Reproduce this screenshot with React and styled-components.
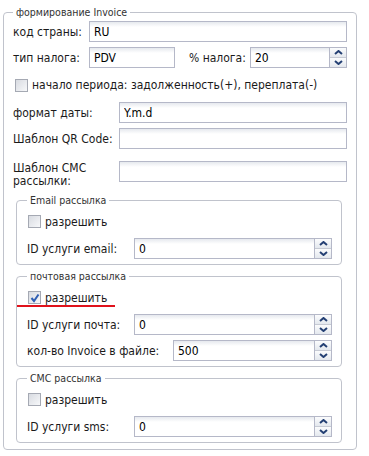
import React from 'react'
import styled, { createGlobalStyle } from 'styled-components'

const FONT = '"DejaVu Sans Condensed", "Liberation Sans", Arial, sans-serif'

const GlobalStyle = createGlobalStyle`
  body {
    margin: 0;
    background: #fff;
    font-family: ${FONT};
    font-size: 12px;
    color: #1a1a1a;
  }
`

const Page = styled.div`
  padding: 6px 0 0 3px;
`

const Fieldset = styled.fieldset`
  box-sizing: border-box;
  width: ${(p) => (p.$inner ? '326px' : '354px')};
  margin: ${(p) => (p.$inner ? '0 0 0 3px' : '0')};
  border: 1px solid #c0c3cc;
  border-radius: 4px;
  padding: ${(p) => (p.$inner ? '0 9px 5px 10px' : '0 9px 6px 9px')};
  min-width: 0;
`

const Legend = styled.legend`
  padding: 0 3px;
  font-size: 10.5px;
  line-height: 13px;
  color: #333;
`

const Body = styled.div`
  display: flex;
  flex-direction: column;
  gap: 5px;
  padding-top: ${(p) => (p.$inner ? '3px' : '2px')};
`

const Row = styled.div`
  display: flex;
  align-items: ${(p) => (p.$tall ? 'flex-start' : 'center')};
  margin-top: ${(p) => (p.$tall ? '7px' : '0')};
  margin-bottom: ${(p) => (p.$tall ? '1px' : '0')};
  min-height: 21px;
`

const Label = styled.label`
  flex: 0 0 ${(p) => p.$w}px;
  line-height: 13px;
  padding-top: 1px;
  white-space: nowrap;
`

const Input = styled.input`
  box-sizing: border-box;
  height: 21px;
  width: ${(p) => (p.$w ? `${p.$w}px` : '10px')};
  flex: ${(p) => (p.$w ? '0 0 auto' : '1 1 0')};
  min-width: 0;
  margin: 0;
  padding: 1px 4px 0;
  border: 1px solid #b5b8c8;
  background: linear-gradient(to bottom, #e6e9ee 0, #fff 5px);
  font: 12px ${FONT};
  color: #000;
  outline: none;
`

const SpinBox = styled.div`
  box-sizing: border-box;
  display: flex;
  flex: 1 1 0;
  min-width: 0;
  height: 21px;
  border: 1px solid #b5b8c8;
  background: linear-gradient(to bottom, #e6e9ee 0, #fff 5px);
`

const SpinInput = styled.input`
  flex: 1 1 0;
  width: 10px;
  min-width: 0;
  margin: 0;
  padding: 1px 4px 0;
  border: 0;
  background: transparent;
  font: 12px ${FONT};
  color: #000;
  outline: none;
`

const Triggers = styled.div`
  display: flex;
  flex-direction: column;
  width: 16px;
  border-left: 1px solid #b5b8c8;
`

const Trigger = styled.div`
  flex: 1;
  display: flex;
  align-items: center;
  justify-content: center;
  background: linear-gradient(to bottom, #fbfcfd, #e4e8ee);
  border-top: ${(p) => (p.$down ? '1px solid #c6cad4' : '0')};
`

const Gap = styled.div`
  flex: 0 0 ${(p) => p.$w}px;
`

const CheckRow = styled.div`
  position: relative;
  display: flex;
  align-items: center;
  height: ${(p) => p.$h}px;
`

const Box = styled.span`
  box-sizing: border-box;
  display: flex;
  align-items: center;
  justify-content: center;
  width: 13px;
  height: 13px;
  margin: 0 4px 0 ${(p) => p.$ml}px;
  border: 1px solid #a5a9b3;
  background: linear-gradient(135deg, #d8dbe1, #f7f8fa);
`

const Underline = styled.span`
  position: absolute;
  left: -10px;
  top: 19px;
  width: 98px;
  height: 2px;
  background: #e0121b;
`

const Arrow = ({ down }) => (
  <svg width="9" height="5" viewBox="0 0 9 5">
    <path
      d={down ? 'M1 1 L4.5 4 L8 1' : 'M1 4 L4.5 1 L8 4'}
      fill="none"
      stroke="#233f73"
      strokeWidth="2"
    />
  </svg>
)

const Spin = ({ value }) => (
  <SpinBox>
    <SpinInput defaultValue={value} />
    <Triggers>
      <Trigger>
        <Arrow />
      </Trigger>
      <Trigger $down>
        <Arrow down />
      </Trigger>
    </Triggers>
  </SpinBox>
)

const Check = ({ checked, label, ml = 2, h = 23, mark }) => (
  <CheckRow $h={h}>
    <Box $ml={ml}>
      {checked && (
        <svg width="10" height="10" viewBox="0 0 10 10">
          <path d="M1.5 5 L4 8 L8.5 1.5" fill="none" stroke="#2f5fb3" strokeWidth="2" />
        </svg>
      )}
    </Box>
    {label}
    {mark && <Underline />}
  </CheckRow>
)

export default function App() {
  return (
    <Page>
      <GlobalStyle />
      <Fieldset>
        <Legend>формирование Invoice</Legend>
        <Body>
          <Row>
            <Label $w={76}>код страны:</Label>
            <Input defaultValue="RU" />
          </Row>
          <Row>
            <Label $w={76}>тип налога:</Label>
            <Input $w={86} defaultValue="PDV" />
            <Gap $w={14} />
            <Label $w={61}>% налога:</Label>
            <Spin value="20" />
          </Row>
          <Check h={24} label="начало периода: задолженность(+), переплата(-)" />
          <Row>
            <Label $w={106}>формат даты:</Label>
            <Input defaultValue="Y.m.d" />
          </Row>
          <Row>
            <Label $w={106}>Шаблон QR Code:</Label>
            <Input />
          </Row>
          <Row $tall>
            <Label $w={106}>
              Шаблон СМС
              <br />
              рассылки:
            </Label>
            <Input />
          </Row>

          <Fieldset $inner>
            <Legend>Email рассылка</Legend>
            <Body $inner>
              <Check ml={1} label="разрешить" />
              <Row>
                <Label $w={107}>ID услуги email:</Label>
                <Spin value="0" />
              </Row>
            </Body>
          </Fieldset>

          <Fieldset $inner>
            <Legend>почтовая рассылка</Legend>
            <Body $inner>
              <Check ml={1} checked mark label="разрешить" />
              <Row>
                <Label $w={107}>ID услуги почта:</Label>
                <Spin value="0" />
              </Row>
              <Row>
                <Label $w={146}>кол-во Invoice в файле:</Label>
                <Spin value="500" />
              </Row>
            </Body>
          </Fieldset>

          <Fieldset $inner>
            <Legend>СМС рассылка</Legend>
            <Body $inner>
              <Check ml={1} label="разрешить" />
              <Row>
                <Label $w={107}>ID услуги sms:</Label>
                <Spin value="0" />
              </Row>
            </Body>
          </Fieldset>
        </Body>
      </Fieldset>
    </Page>
  )
}
